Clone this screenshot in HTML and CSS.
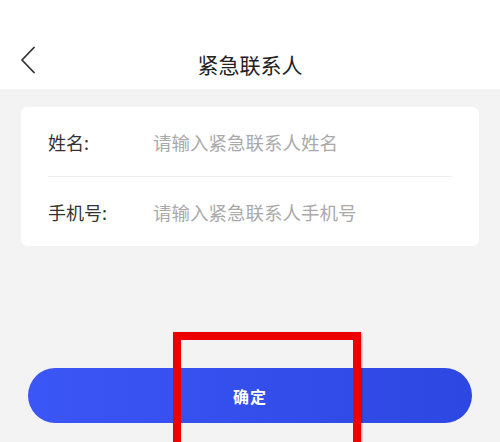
FILE: index.html
```html
<!DOCTYPE html>
<html lang="zh-CN">
<head>
    <meta charset="UTF-8">
    <meta name="viewport" content="width=device-width, initial-scale=1.0">
    <title>紧急联系人</title>
    <link rel="stylesheet" href="styles.css">
</head>
<body>
    <div class="page">
        <div class="header">
            <button class="back" aria-label="返回">
                <svg width="16" height="28" viewBox="0 0 16 28">
                    <polyline points="14,1.5 2,14 14,26.5" fill="none" stroke="#333" stroke-width="1.8" stroke-linecap="round" stroke-linejoin="round"/>
                </svg>
            </button>
            <h1>紧急联系人</h1>
        </div>
        <div class="card">
            <div class="row">
                <label class="label">姓名:</label>
                <input class="field" type="text" placeholder="请输入紧急联系人姓名">
            </div>
            <div class="row">
                <label class="label">手机号:</label>
                <input class="field" type="tel" placeholder="请输入紧急联系人手机号">
            </div>
        </div>
        <div class="actions">
            <button class="submit">确定</button>
        </div>
        <div class="highlight"></div>
    </div>
</body>
</html>
```

FILE: styles.css
```css
* {
    box-sizing: border-box;
    margin: 0;
    padding: 0;
}
body {
    font-family: "Noto Sans CJK SC", "Noto Sans", sans-serif;
    background: #f3f3f3;
    color: #333;
    width: 500px;
    height: 442px;
    overflow: hidden;
}
.page {
    position: relative;
    height: 442px;
    overflow: hidden;
}
.header {
    position: relative;
    height: 89px;
    background: #fff;
    display: flex;
    align-items: flex-end;
    justify-content: center;
    padding-bottom: 11px;
}
.back {
    position: absolute;
    left: 20px;
    top: 46px;
    border: none;
    background: none;
    display: flex;
}
h1 {
    font-size: 21px;
    font-weight: 400;
    color: #222;
    line-height: 28px;
}
.card {
    margin: 18px 21px 0;
    background: #fff;
    border-radius: 6px;
    padding: 0 27px;
    height: 139px;
    display: flex;
    flex-direction: column;
}
.row {
    flex: 1;
    display: flex;
    align-items: center;
}
.row + .row {
    border-top: 1px solid #efefef;
}
.label {
    width: 105px;
    font-size: 18px;
    color: #333;
}
.field {
    flex: 1;
    border: none;
    outline: none;
    font-family: inherit;
    font-size: 18.5px;
    color: #333;
    background: transparent;
}
.field::placeholder {
    color: #aaa;
}
.actions {
    padding: 122px 28px 0;
}
.submit {
    width: 100%;
    height: 55px;
    border: none;
    border-radius: 28px;
    background: linear-gradient(90deg, #3b56f6, #2d47e2);
    color: #fff;
    font-family: inherit;
    font-size: 16px;
    font-weight: 700;
    letter-spacing: 1px;
}
.highlight {
    position: absolute;
    left: 173px;
    top: 332px;
    width: 188px;
    height: 110px;
    border: 8px solid #ee0000;
    border-bottom: none;
    box-shadow: 1px 1px 2px rgba(0, 0, 0, 0.3);
}
```
